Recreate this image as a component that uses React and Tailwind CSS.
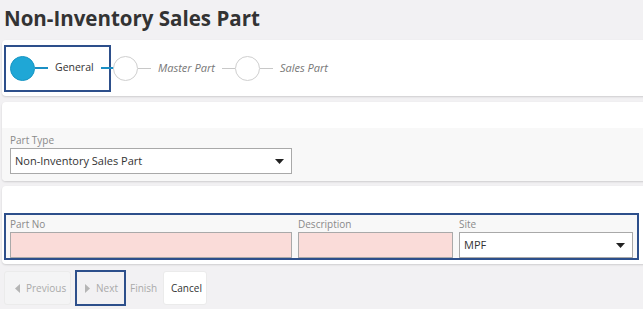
import React from 'react';

const font = { fontFamily: '"Open Sans", "Liberation Sans", sans-serif' };

function Caret() {
  return (
    <svg width="9" height="5" viewBox="0 0 9 5" className="shrink-0">
      <path d="M0 0 L9 0 L4.5 5 Z" fill="#222" />
    </svg>
  );
}

function Circle({ active }) {
  return (
    <div
      className={`shrink-0 w-[25px] h-[25px] rounded-full ${active ? 'bg-[#1fa7d6] border border-[#1795c3]' : 'bg-white border border-[#cfcfcf]'}`}
    />
  );
}

function Line({ active }) {
  return <div className={`shrink-0 w-[13px] ${active ? 'h-[2px] bg-[#1b8fc4]' : 'h-[1px] bg-[#c8c8c8]'}`} />;
}

function Field({ label, width, pink, value, select }) {
  return (
    <div className="flex flex-col" style={{ width }}>
      <span className="text-[10px] leading-[12px] text-[#8a8a8a] mb-[2px]">{label}</span>
      <div
        className={`h-[26px] border border-[#a9a9a9] flex items-center justify-between pl-[4px] pr-[7px] ${pink ? 'bg-[#fadcd9]' : 'bg-white'}`}
      >
        <span className="text-[11px] text-[#333]">{value}</span>
        {select && <Caret />}
      </div>
    </div>
  );
}

export default function App() {
  return (
    <div className="w-[643px] h-[309px] bg-[#f2f1f3] overflow-hidden" style={font}>
      <h1 className="text-[20.5px] font-bold text-[#333] leading-[26px] pl-[4px] pt-[5px]">
        Non-Inventory Sales Part
      </h1>

      <div className="mt-[9px] ml-[2px] w-[660px] h-[56px] bg-white rounded-[4px] shadow-[0_1px_2px_rgba(0,0,0,0.15)] flex items-center pl-[2px]">
        <div className="shrink-0 flex items-center h-[47px] w-[107px] border-2 border-[#2d4f8b] pl-[4px]">
          <Circle active />
          <Line active />
          <span className="shrink-0 px-[7px] text-[10.5px] text-[#333] font-medium">General</span>
          <Line active />
        </div>
        <div className="flex items-center ml-[2px]">
          <Circle />
          <Line />
          <span className="px-[7px] text-[11px] text-[#777] italic">Master Part</span>
          <Line />
          <Circle />
          <Line />
          <span className="px-[7px] text-[11px] text-[#777] italic">Sales Part</span>
        </div>
      </div>

      <div className="mt-[6px] ml-[2px] w-[660px] bg-white rounded-[4px] shadow-[0_1px_2px_rgba(0,0,0,0.15)] overflow-hidden">
        <div className="h-[26px]" />
        <div className="bg-[#f8f8f8] pt-[6px] pb-[7px] pl-[8px]">
          <Field label="Part Type" width="282px" value="Non-Inventory Sales Part" select />
        </div>
      </div>

      <div className="mt-[5px] ml-[2px] w-[660px] bg-white rounded-[4px] shadow-[0_1px_2px_rgba(0,0,0,0.15)] pb-[4px]">
        <div className="h-[27px]" />
        <div className="ml-[2px] w-[635px] border-2 border-[#2d4f8b] bg-[#f8f8f8] flex gap-[6px] pl-[4px] pt-[3px]">
          <Field label="Part No" width="282px" pink value="" />
          <Field label="Description" width="155px" pink value="" />
          <Field label="Site" width="174px" value="MPF" select />
        </div>
      </div>

      <div className="mt-[6px] ml-[4px] flex items-center h-[36px] text-[10px]">
        <div className="h-[34px] w-[67px] pl-[10px] flex items-center gap-[6px] bg-[#f4f4f5] rounded-[3px] border border-[#ebebeb] text-[#aaa]">
          <svg width="5" height="9" viewBox="0 0 5 9"><path d="M5 0 L5 9 L0 4.5 Z" fill="#b5b5b5" /></svg>
          Previous
        </div>
        <div className="ml-[4px] h-[36px] w-[51px] border-2 border-[#2d4f8b] flex items-center gap-[6px] pl-[8px] text-[#aaa]">
          <svg width="5" height="9" viewBox="0 0 5 9"><path d="M0 0 L5 4.5 L0 9 Z" fill="#b5b5b5" /></svg>
          Next
        </div>
        <div className="h-[34px] w-[37px] pl-[4px] flex items-center text-[#aaa]">Finish</div>
        <div className="h-[34px] w-[44px] pl-[7px] flex items-center bg-white rounded-[3px] border border-[#ebebeb] text-[#333]">
          Cancel
        </div>
      </div>
    </div>
  );
}
